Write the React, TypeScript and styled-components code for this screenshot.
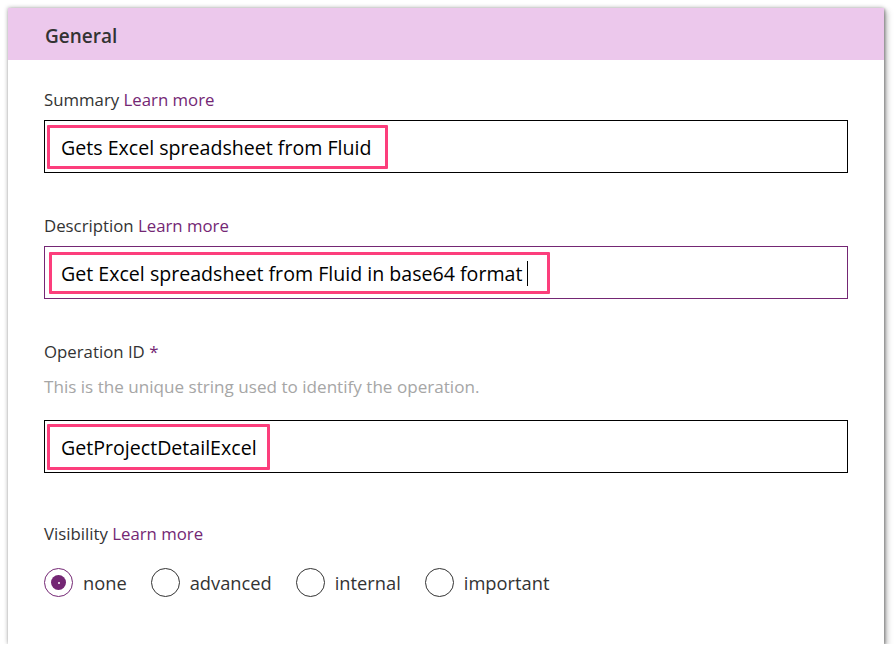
import React from 'react';
import styled, {createGlobalStyle} from 'styled-components';

const GlobalStyle = createGlobalStyle`
  html, body {
    margin: 0;
    padding: 0;
    background: #ffffff;
  }
  body {
    font-family: "Segoe UI", "Open Sans", "Noto Sans", sans-serif;
    color: #333333;
  }
`;

const Card = styled.section`
  margin: 8px 0 0 8px;
  width: 876px;
  height: 636px;
  background: #ffffff;
  box-shadow: 1px 1px 3px rgba(0, 0, 0, 0.35), 3px 3px 6px rgba(0, 0, 0, 0.25), -1px -1px 4px rgba(0, 0, 0, 0.15);
  display: flex;
  flex-direction: column;
`;

const Header = styled.header`
  height: 52px;
  box-sizing: border-box;
  padding: 3px 0 0 37px;
  background: #ecc8ec;
  display: flex;
  align-items: center;
  font-size: 19px;
  font-weight: 600;
  color: #333333;
`;

const Body = styled.div`
  padding: 30px 36px 0 36px;
  display: flex;
  flex-direction: column;
`;

const Field = styled.div<{ $gap?: number }>`
  display: flex;
  flex-direction: column;
  margin-bottom: ${p => p.$gap ?? 43}px;
`;

const Label = styled.div<{ $below?: number }>`
  font-size: 16.8px;
  line-height: 20px;
  color: #333333;
  margin-bottom: ${p => p.$below ?? 10}px;
`;

const LearnMore = styled.span`
  color: #742774;
`;

const Required = styled.span`
  color: #742774;
`;

const Help = styled.div`
  font-size: 17.1px;
  line-height: 20px;
  color: #a6a6a6;
  margin: 15px 0 23px;
`;

const InputBox = styled.div<{ $focused?: boolean }>`
  height: 53px;
  box-sizing: border-box;
  border: 1px solid ${p => (p.$focused ? '#742774' : '#000000')};
  display: flex;
  align-items: center;
  padding-left: 2px;
`;

const Highlight = styled.span<{ $width: number; $height: number; $pad?: number; $left?: number }>`
  box-sizing: border-box;
  width: ${p => p.$width}px;
  height: ${p => p.$height}px;
  margin-left: ${p => p.$left ?? 0}px;
  border: 3px solid #fc3e7c;
  border-radius: 1px;
  display: flex;
  align-items: center;
  padding: 2px 0 0 ${p => p.$pad ?? 11}px;
  font-size: 19.6px;
  color: #000000;
  white-space: nowrap;
`;

const Caret = styled.span`
  display: inline-block;
  width: 1px;
  height: 25px;
  background: #000000;
  margin-left: 5px;
`;

const RadioRow = styled.div`
  display: flex;
  align-items: center;
  gap: 24px;
`;

const RadioItem = styled.label`
  display: flex;
  align-items: center;
  gap: 10px;
  font-size: 18.3px;
  color: #333333;
`;

const Circle = styled.span<{ $checked?: boolean }>`
  width: 29px;
  height: 29px;
  box-sizing: border-box;
  border-radius: 50%;
  border: 1px solid ${p => (p.$checked ? '#742774' : '#333333')};
  display: flex;
  align-items: center;
  justify-content: center;
`;

const Dot = styled.span`
  width: 15px;
  height: 15px;
  border-radius: 50%;
  background: #742774;
  display: flex;
  align-items: center;
  justify-content: center;

  &::after {
    content: "";
    width: 2px;
    height: 2px;
    border-radius: 50%;
    background: #ffffff;
  }
`;

const options = ['none', 'advanced', 'internal', 'important'];

export default function App() {
    return (
        <>
            <GlobalStyle/>
            <Card>
                <Header>General</Header>
                <Body>
                    <Field>
                        <Label>Summary <LearnMore>Learn more</LearnMore></Label>
                        <InputBox>
                            <Highlight $width={341} $height={44}>Gets Excel spreadsheet from Fluid</Highlight>
                        </InputBox>
                    </Field>
                    <Field>
                        <Label>Description <LearnMore>Learn more</LearnMore></Label>
                        <InputBox $focused>
                            <Highlight $width={501} $height={42} $left={2} $pad={9}>
                                Get Excel spreadsheet from Fluid in base64 format<Caret/>
                            </Highlight>
                        </InputBox>
                    </Field>
                    <Field $gap={51}>
                        <Label $below={0}>Operation ID <Required>*</Required></Label>
                        <Help>This is the unique string used to identify the operation.</Help>
                        <InputBox>
                            <Highlight $width={223} $height={46}>GetProjectDetailExcel</Highlight>
                        </InputBox>
                    </Field>
                    <Field $gap={0}>
                        <Label $below={24}>Visibility <LearnMore>Learn more</LearnMore></Label>
                        <RadioRow>
                            {options.map((o, i) => (
                                <RadioItem key={o}>
                                    <Circle $checked={i === 0}>{i === 0 && <Dot/>}</Circle>
                                    {o}
                                </RadioItem>
                            ))}
                        </RadioRow>
                    </Field>
                </Body>
            </Card>
        </>
    );
}
